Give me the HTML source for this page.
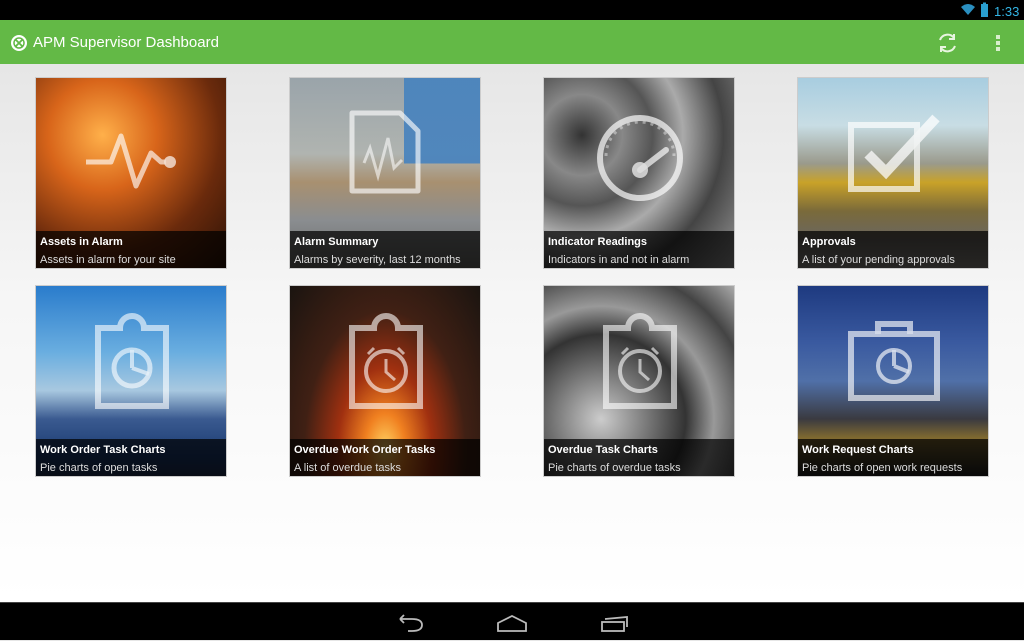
<!DOCTYPE html>
<html><head><meta charset="utf-8"><style>
*{margin:0;padding:0;box-sizing:border-box}
body{width:1024px;height:640px;overflow:hidden;font-family:"Liberation Sans",sans-serif;background:linear-gradient(#e6e6e6 64px,#f6f6f6 300px,#fff 600px);position:relative}
#sb{position:absolute;left:0;top:0;width:1024px;height:20px;background:#000}
#ab{position:absolute;left:0;top:20px;width:1024px;height:44px;background:#63b946;color:#fff}
#ab .t{position:absolute;left:33px;top:14px;font-size:15px}
#nav{position:absolute;left:0;top:602px;width:1024px;height:38px;background:#000;border-top:1px solid #444}
.tile{position:absolute;width:192px;height:192px;overflow:hidden;border:1px solid #ccc}
.tile svg{position:absolute;left:0;top:0;opacity:.8}
.cap{position:absolute;left:0;bottom:0;width:100%;height:37px;background:rgba(0,0,0,.72);color:#fff;padding:5px 4px}
.cap b{display:block;font-size:11px;font-weight:bold;margin-bottom:6px}
.cap span{display:block;font-size:11px;color:#ddd}
</style></head><body>
<div id="sb">
<svg width="1024" height="20" style="position:absolute;left:0;top:0">
<path d="M961 7 Q968 1 975 7 L968 15 Z" fill="#2a8fc0"/>
<rect x="981" y="4" width="7" height="13" fill="#2a9fd0"/><rect x="983" y="2.5" width="3" height="2" fill="#2a9fd0"/>
<text x="994" y="16" font-size="13" fill="#33b5e5" font-family="Liberation Sans">1:33</text>
</svg></div>
<div id="ab">
<svg width="1024" height="44" style="position:absolute;left:0;top:0">
<circle cx="19" cy="23" r="8" fill="#fff"/>
<circle cx="19" cy="23" r="5" fill="none" stroke="#63b946" stroke-width="1.5"/>
<path d="M15.5 19.5 L22.5 26.5 M22.5 19.5 L15.5 26.5" stroke="#63b946" stroke-width="1.8"/>
<path d="M940 20 A8 8 0 0 1 954 18 M954 14 L954 19 L949 19" fill="none" stroke="#e8f5e0" stroke-width="2"/>
<path d="M955 26 A8 8 0 0 1 941 28 M941 32 L941 27 L946 27" fill="none" stroke="#e8f5e0" stroke-width="2"/>
<rect x="996" y="15" width="4" height="4" fill="#d8efcc"/><rect x="996" y="21" width="4" height="4" fill="#d8efcc"/><rect x="996" y="27" width="4" height="4" fill="#d8efcc"/>
</svg>
<div class="t">APM Supervisor Dashboard</div></div>

<div class="tile" style="left:35px;top:77px;background:radial-gradient(circle at 35% 30%,#ffb04a,#d8651a 30%,#6a2a0c 65%,#2a1206)">
<svg width="192" height="192"><path d="M50 84 L75 84 L85 58 L100 108 L115 75 L125 84 L130 84" fill="none" stroke="rgba(255,255,255,.8)" stroke-width="5" stroke-linejoin="round"/><circle cx="134" cy="84" r="6" fill="rgba(255,255,255,.85)"/></svg>
<div class="cap"><b>Assets in Alarm</b><span>Assets in alarm for your site</span></div></div>

<div class="tile" style="left:289px;top:77px;background:linear-gradient(90deg,transparent 60%,rgba(70,130,190,.9) 60%) 0 0/100% 45% no-repeat,linear-gradient(#9aa4aa 0,#b0b4b0 40%,#a89070 55%,#8a8d90 75%,#6a6a66)">
<svg width="192" height="192"><path d="M62 35 L110 35 L128 53 L128 113 L62 113 Z" fill="none" stroke="rgba(255,255,255,.8)" stroke-width="5" stroke-linejoin="round"/><path d="M74 85 L80 70 L88 98 L98 60 L104 90 L112 82" fill="none" stroke="rgba(255,255,255,.7)" stroke-width="3"/></svg>
<div class="cap"><b>Alarm Summary</b><span>Alarms by severity, last 12 months</span></div></div>

<div class="tile" style="left:543px;top:77px;background:radial-gradient(circle at 20% 30%,#333 0,#888 20%,#555 35%,#aaa 50%,#444 70%,#999)">
<svg width="192" height="192"><circle cx="96" cy="80" r="40" fill="none" stroke="rgba(255,255,255,.85)" stroke-width="6"/><path d="M62 78 A34 34 0 0 1 130 78" fill="none" stroke="rgba(255,255,255,.5)" stroke-width="3" stroke-dasharray="3 5"/><path d="M96 92 L122 72" stroke="rgba(255,255,255,.85)" stroke-width="6" stroke-linecap="round"/><circle cx="96" cy="92" r="8" fill="rgba(255,255,255,.85)"/></svg>
<div class="cap"><b>Indicator Readings</b><span>Indicators in and not in alarm</span></div></div>

<div class="tile" style="left:797px;top:77px;background:linear-gradient(#a8cde0 0,#c8dde4 25%,#9a9a8c 45%,#c9a228 55%,#7a6a3a 70%,#6a6660 85%,#8a8680)">
<svg width="192" height="192"><rect x="53" y="47" width="66" height="64" fill="none" stroke="rgba(255,255,255,.85)" stroke-width="6"/><path d="M70 76 L88 94 L138 40" fill="none" stroke="rgba(255,255,255,.9)" stroke-width="10"/></svg>
<div class="cap"><b>Approvals</b><span>A list of your pending approvals</span></div></div>

<div class="tile" style="left:35px;top:285px;background:linear-gradient(#2a7ccc 0,#6aaee0 35%,#a8c8e0 55%,#3a5a90 70%,#1a3a70 90%,#203050)">
<svg width="192" height="192"><path d="M62 42 L84 42 A12 12 0 0 1 108 42 L130 42 L130 120 L62 120 Z" fill="none" stroke="rgba(255,255,255,.75)" stroke-width="6"/><circle cx="96" cy="82" r="18" fill="none" stroke="rgba(255,255,255,.75)" stroke-width="5"/><path d="M96 82 L96 64 M96 82 L113 88" stroke="rgba(255,255,255,.75)" stroke-width="4"/></svg>
<div class="cap"><b>Work Order Task Charts</b><span>Pie charts of open tasks</span></div></div>

<div class="tile" style="left:289px;top:285px;background:radial-gradient(ellipse at 50% 85%,#ffd060 0,#f08020 15%,#a03010 35%,#402014 60%,#1a1410)">
<svg width="192" height="192"><path d="M62 42 L84 42 A12 12 0 0 1 108 42 L130 42 L130 120 L62 120 Z" fill="none" stroke="rgba(255,255,255,.75)" stroke-width="6"/><circle cx="96" cy="85" r="20" fill="none" stroke="rgba(255,255,255,.75)" stroke-width="4"/><path d="M96 73 L96 86 L105 94 M78 68 L84 62 M114 68 L108 62" stroke="rgba(255,255,255,.75)" stroke-width="3" fill="none"/></svg>
<div class="cap"><b>Overdue Work Order Tasks</b><span>A list of overdue tasks</span></div></div>

<div class="tile" style="left:543px;top:285px;background:radial-gradient(circle at 30% 70%,#ccc 0,#777 25%,#333 45%,#999 60%,#444 80%,#aaa)">
<svg width="192" height="192"><path d="M62 42 L84 42 A12 12 0 0 1 108 42 L130 42 L130 120 L62 120 Z" fill="none" stroke="rgba(255,255,255,.75)" stroke-width="6"/><circle cx="96" cy="85" r="20" fill="none" stroke="rgba(255,255,255,.75)" stroke-width="4"/><path d="M96 73 L96 86 L105 94 M78 68 L84 62 M114 68 L108 62" stroke="rgba(255,255,255,.75)" stroke-width="3" fill="none"/></svg>
<div class="cap"><b>Overdue Task Charts</b><span>Pie charts of overdue tasks</span></div></div>

<div class="tile" style="left:797px;top:285px;background:linear-gradient(#1e3a80 0,#3a5aa0 30%,#5070a8 50%,#3a3a40 70%,#806a30 80%,#202020)">
<svg width="192" height="192"><path d="M80 48 L80 38 L112 38 L112 48" fill="none" stroke="rgba(255,255,255,.8)" stroke-width="6"/><rect x="53" y="48" width="86" height="64" fill="none" stroke="rgba(255,255,255,.8)" stroke-width="6"/><circle cx="96" cy="80" r="16" fill="none" stroke="rgba(255,255,255,.8)" stroke-width="4"/><path d="M96 80 L96 64 M96 80 L111 86" stroke="rgba(255,255,255,.8)" stroke-width="4"/></svg>
<div class="cap"><b>Work Request Charts</b><span>Pie charts of open work requests</span></div></div>

<div id="nav"><svg width="1024" height="38" style="position:absolute;left:0;top:0">
<path d="M400 16 L412 16 Q422 16 422 22 Q422 28 412 28 L408 28 M400 16 L404 12 M400 16 L404 20" fill="none" stroke="#bbb" stroke-width="1.8"/>
<path d="M498 20 L512 13 L526 20 L526 28 L498 28 Z" fill="none" stroke="#bbb" stroke-width="1.8"/>
<rect x="602" y="19" width="22" height="9" fill="none" stroke="#bbb" stroke-width="1.8"/><path d="M605 16 L627 14 L627 24" fill="none" stroke="#bbb" stroke-width="1.8"/>
</svg></div>
</body></html>
